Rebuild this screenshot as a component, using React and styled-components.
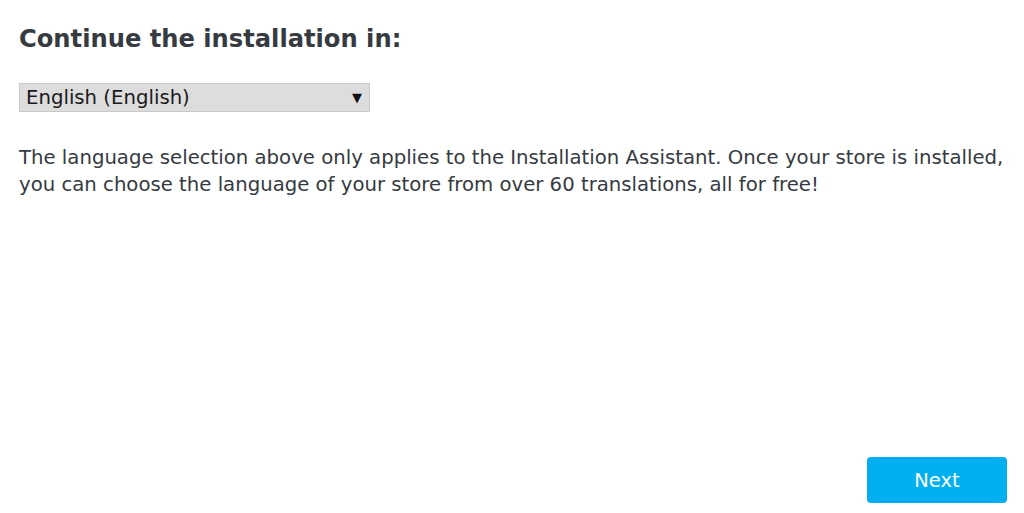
import React from "react";
import styled, { createGlobalStyle } from "styled-components";

const Global = createGlobalStyle`
  html, body { margin: 0; padding: 0; background: #fff; }
  body { font-family: "DejaVu Sans", sans-serif; color: #363a41; }
`;

const Page = styled.div`
  box-sizing: border-box;
  height: 513px;
  padding: 24px 17px 10px 19px;
  display: flex;
  flex-direction: column;
`;

const Title = styled.h2`
  margin: 0;
  font-size: 24.2px;
  font-weight: bold;
  line-height: 30px;
  color: #363a41;
`;

const Select = styled.div`
  margin-top: 29px;
  box-sizing: border-box;
  width: 351px;
  height: 29px;
  background: #dddddd;
  border: 1px solid #c8c8c8;
  display: flex;
  align-items: center;
  justify-content: space-between;
  padding: 0 7px 0 6px;
  font-size: 19.7px;
  color: #1a1a1a;
`;

const Arrow = styled.span`
  font-size: 13px;
  color: #111;
`;

const Text = styled.p`
  margin: 32px 0 0;
  font-size: 19.7px;
  line-height: 27px;
  color: #363a41;
`;

const Footer = styled.div`
  margin-top: auto;
  display: flex;
  justify-content: flex-end;
`;

const Button = styled.button`
  width: 140px;
  height: 46px;
  border: none;
  border-radius: 4px;
  background: #00aff0;
  color: #fff;
  font-family: "DejaVu Sans", sans-serif;
  font-size: 19.5px;
`;

export default function App() {
  return (
    <>
      <Global />
      <Page>
        <Title>Continue the installation in:</Title>
        <Select>
          <span>English (English)</span>
          <Arrow>▼</Arrow>
        </Select>
        <Text>
          The language selection above only applies to the Installation Assistant. Once your store is installed,
          you can choose the language of your store from over 60 translations, all for free!
        </Text>
        <Footer>
          <Button>Next</Button>
        </Footer>
      </Page>
    </>
  );
}
